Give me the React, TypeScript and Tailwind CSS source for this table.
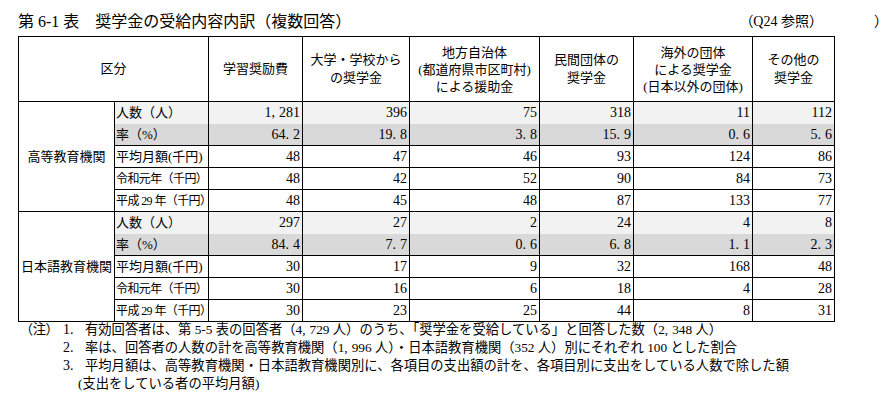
import React from "react";

const font = "font-['Liberation_Serif','Noto_Sans_CJK_JP',serif]";

// wide-looking comma / period like the original Mincho digits
function n(s: string) {
  const parts = s.split(/([,.])(?=\d)/);
  return parts.map((p, i) =>
    p === "," || p === "." ? (
      <span key={i} className="mr-[4px]">
        {p}
      </span>
    ) : (
      <React.Fragment key={i}>{p}</React.Fragment>
    )
  );
}

type Row = { label: string; small?: boolean; values: string[] };

const groups: { name: string; rows: Row[] }[] = [
  {
    name: "高等教育機関",
    rows: [
      { label: "人数（人）", values: ["1,281", "396", "75", "318", "11", "112"] },
      { label: "率（%）", values: ["64.2", "19.8", "3.8", "15.9", "0.6", "5.6"] },
      { label: "平均月額(千円)", values: ["48", "47", "46", "93", "124", "86"] },
      { label: "令和元年（千円）", small: true, values: ["48", "42", "52", "90", "84", "73"] },
      { label: "平成 29 年（千円）", small: true, values: ["48", "45", "48", "87", "133", "77"] },
    ],
  },
  {
    name: "日本語教育機関",
    rows: [
      { label: "人数（人）", values: ["297", "27", "2", "24", "4", "8"] },
      { label: "率（%）", values: ["84.4", "7.7", "0.6", "6.8", "1.1", "2.3"] },
      { label: "平均月額(千円)", values: ["30", "17", "9", "32", "168", "48"] },
      { label: "令和元年（千円）", small: true, values: ["30", "16", "6", "18", "4", "28"] },
      { label: "平成 29 年（千円）", small: true, values: ["30", "23", "25", "44", "8", "31"] },
    ],
  },
];

export default function App() {
  return (
    <div className={`min-h-screen w-[888px] bg-white text-black ${font}`}>
      <div className="pl-[18px] pt-[12px]">
        {/* Title */}
        <div className="flex items-end">
          <div className="flex w-[816px] items-end justify-between pr-[9px]">
            <h1 className="text-[16px] leading-[20px]">
              第 6-1 表　奨学金の受給内容内訳（複数回答）
            </h1>
            <span className="text-[14px] leading-[20px]">（Q24 参照）</span>
          </div>
          <span className="ml-[42px] text-[14px] leading-[20px]">）</span>
        </div>

        {/* Table */}
        <table className="mt-[4px] w-[817px] table-fixed border-collapse text-[13px]">
          <colgroup>
            <col className="w-[96px]" />
            <col className="w-[94px]" />
            <col className="w-[94px]" />
            <col className="w-[107px]" />
            <col className="w-[130px]" />
            <col className="w-[94px]" />
            <col className="w-[119px]" />
            <col className="w-[82px]" />
          </colgroup>
          <thead>
            <tr className="h-[65px]">
              <th colSpan={2} className="border border-black font-normal">区分</th>
              <th className="border border-black font-normal">学習奨励費</th>
              <th className="border border-black font-normal leading-[18px]">
                大学・学校から
                <br />
                の奨学金
              </th>
              <th className="border border-black font-normal leading-[17px]">
                地方自治体
                <br />
                (都道府県市区町村)
                <br />
                による援助金
              </th>
              <th className="border border-black font-normal leading-[18px]">
                民間団体の
                <br />
                奨学金
              </th>
              <th className="border border-black font-normal leading-[17px]">
                海外の団体
                <br />
                による奨学金
                <br />
                (日本以外の団体)
              </th>
              <th className="border border-black font-normal leading-[18px]">
                その他の
                <br />
                奨学金
              </th>
            </tr>
          </thead>
          <tbody>
            {groups.map((g) =>
              g.rows.map((r, i) => {
                const shade =
                  i === 0 ? "bg-[#f2f2f2] border-b-0" : i === 1 ? "bg-[#d9d9d9] border-t-0" : "";
                return (
                  <tr key={g.name + i} className="h-[22px]">
                    {i === 0 && (
                      <td rowSpan={5} className="border border-black p-0 text-center whitespace-nowrap">
                        {g.name}
                      </td>
                    )}
                    <td
                      className={`border border-black py-0 pl-[1px] pr-0 whitespace-nowrap ${shade} ${
                        r.small ? "text-[12px] tracking-[-0.6px]" : ""
                      }`}
                    >
                      {r.label}
                    </td>
                    {r.values.map((v, j) => (
                      <td
                        key={j}
                        className={`border border-black py-0 pl-0 pr-[2px] text-right text-[14px] ${shade}`}
                      >
                        {n(v)}
                      </td>
                    ))}
                  </tr>
                );
              })
            )}
          </tbody>
        </table>

        {/* Notes */}
        <div className="mt-[-1px] grid grid-cols-[8px_37px_22px_1fr] text-[13.3px] leading-[18px]">
          <span />
          <span className="[font-feature-settings:'palt']">（注）</span>
          <span className="text-[14px]">1.</span>
          <span>
            有効回答者は、第 5-5 表の回答者（{n("4,729")} 人）のうち、「奨学金を受給している」と回答した数（{n("2,348")} 人）
          </span>
          <span />
          <span />
          <span className="text-[14px]">2.</span>
          <span>
            率は、回答者の人数の計を高等教育機関（{n("1,996")} 人）・日本語教育機関（352 人）別にそれぞれ 100 とした割合
          </span>
          <span />
          <span />
          <span className="text-[14px]">3.</span>
          <span>平均月額は、高等教育機関・日本語教育機関別に、各項目の支出額の計を、各項目別に支出をしている人数で除した額</span>
          <span />
          <span />
          <span />
          <span className="ml-[-7px]">(支出をしている者の平均月額)</span>
        </div>
      </div>
    </div>
  );
}
